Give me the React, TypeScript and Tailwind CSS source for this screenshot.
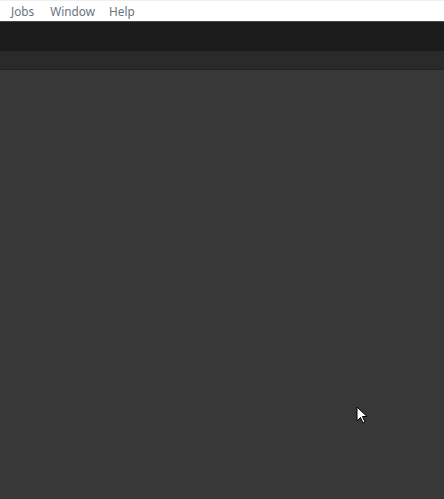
export default function App() {
  return (
    <div className="relative flex h-[499px] w-[444px] flex-col overflow-hidden bg-[#383838]" style={{ fontFamily: '"Noto Sans", "Open Sans", sans-serif' }}>
      {/* Menu bar */}
      <div className="flex h-[21px] items-center border-t border-[#efefef] bg-white pl-[11px] pt-[2px] text-[11.8px] text-[#6b7380]">
        <span>Jobs</span>
        <span className="ml-[16px]">Window</span>
        <span className="ml-[14px]">Help</span>
      </div>
      {/* Toolbar */}
      <div className="h-[30px] border-t border-[#4a4a4a] bg-[#1b1b1b]" />
      {/* Sub bar */}
      <div className="h-[19px] border-b border-[#222222] bg-[#2a2a2a]" />
      <div className="flex-1 bg-[#383838]" />

      {/* Mouse pointer */}
      <svg className="absolute left-[356px] top-[406px]" width="13" height="19" viewBox="0 0 13 19">
        <path d="M1 1 L1 15 L4.5 11.5 L7 17 L9 16 L6.5 10.5 L11 10.5 Z" fill="white" stroke="black" strokeWidth="1" strokeLinejoin="miter" />
      </svg>
    </div>
  );
}
